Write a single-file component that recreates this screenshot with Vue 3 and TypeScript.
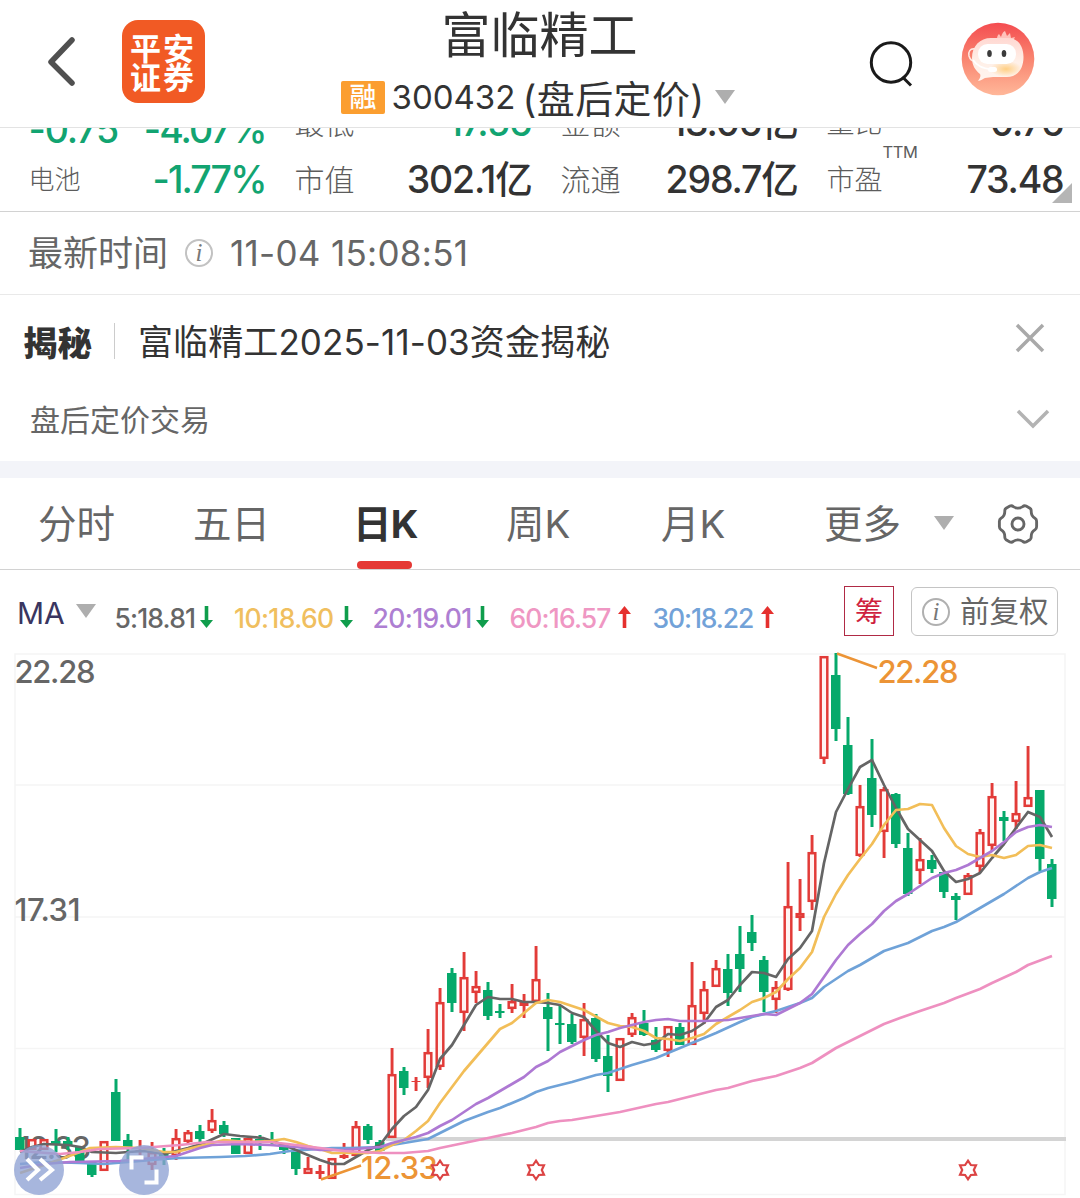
<script setup lang="ts">
type Candle = [kind: 'r' | 'g', high: number, top: number, bottom: number, low: number]

const STEP = 12
const FIRST_X = 20

const candles: Candle[] = [
  ['g', 1128, 1137, 1150, 1150], ['r', 1139, 1139, 1150, 1150], ['r', 1139, 1139, 1150, 1150],
  ['g', 1129, 1141, 1144, 1152], ['g', 1137, 1141, 1145, 1150], ['g', 1147, 1147, 1161, 1161],
  ['g', 1161, 1161, 1175, 1177], ['r', 1141, 1141, 1171, 1171], ['g', 1079, 1092, 1141, 1141],
  ['g', 1134, 1140, 1147, 1160], ['r', 1140, 1150, 1152, 1155], ['r', 1142, 1152, 1165, 1170],
  ['g', 1148, 1153, 1160, 1165], ['r', 1129, 1138, 1156, 1160], ['r', 1130, 1132, 1142, 1144],
  ['g', 1125, 1131, 1139, 1142], ['r', 1109, 1120, 1131, 1133], ['g', 1121, 1125, 1134, 1137],
  ['g', 1138, 1138, 1154, 1154], ['r', 1138, 1138, 1154, 1154], ['g', 1135, 1139, 1141, 1150],
  ['g', 1132, 1139, 1143, 1145], ['g', 1145, 1147, 1150, 1154], ['g', 1152, 1152, 1169, 1175],
  ['r', 1157, 1168, 1174, 1174], ['r', 1165, 1171, 1174, 1179], ['r', 1158, 1158, 1179, 1179],
  ['r', 1143, 1155, 1158, 1159], ['r', 1121, 1126, 1156, 1156], ['g', 1124, 1126, 1140, 1144],
  ['g', 1140, 1142, 1151, 1151], ['r', 1048, 1074, 1138, 1138], ['g', 1067, 1071, 1088, 1095],
  ['r', 1077, 1081, 1082, 1091], ['r', 1029, 1052, 1078, 1088], ['r', 988, 1002, 1067, 1070],
  ['g', 968, 973, 1003, 1012], ['r', 952, 977, 1013, 1031], ['r', 971, 986, 993, 1003],
  ['g', 982, 990, 1016, 1020], ['g', 1004, 1011, 1013, 1018], ['r', 984, 1001, 1009, 1013],
  ['r', 994, 1002, 1006, 1018], ['r', 946, 979, 1002, 1002], ['g', 993, 1007, 1019, 1051],
  ['g', 1006, 1023, 1025, 1044], ['g', 1014, 1024, 1042, 1044], ['r', 1003, 1019, 1038, 1056],
  ['g', 1014, 1018, 1059, 1062], ['g', 1035, 1056, 1076, 1092], ['r', 1038, 1038, 1081, 1081],
  ['r', 1013, 1017, 1035, 1037], ['g', 1010, 1023, 1035, 1036], ['g', 1027, 1040, 1050, 1052],
  ['r', 1026, 1026, 1051, 1057], ['g', 1023, 1027, 1045, 1045], ['r', 962, 1005, 1045, 1045],
  ['r', 981, 989, 1014, 1024], ['r', 960, 968, 987, 987], ['g', 954, 969, 993, 1006],
  ['g', 926, 954, 969, 992], ['g', 915, 932, 943, 951], ['g', 956, 960, 992, 1012],
  ['r', 981, 987, 1000, 1013], ['r', 862, 906, 990, 991], ['r', 879, 913, 918, 931],
  ['r', 835, 852, 902, 910], ['r', 656, 656, 759, 764], ['g', 653, 675, 729, 741],
  ['g', 717, 745, 794, 795], ['r', 785, 806, 856, 857], ['g', 739, 778, 815, 827],
  ['r', 787, 789, 832, 858], ['g', 793, 794, 844, 848], ['g', 833, 848, 894, 896],
  ['r', 838, 859, 871, 884], ['g', 855, 860, 869, 873], ['g', 872, 872, 892, 898],
  ['g', 893, 896, 900, 920], ['r', 873, 875, 895, 895], ['r', 829, 832, 867, 873],
  ['r', 783, 796, 846, 851], ['g', 811, 817, 821, 841], ['r', 781, 813, 822, 829],
  ['r', 746, 797, 807, 807], ['g', 790, 790, 859, 871], ['g', 859, 864, 899, 907],
]

const bars = candles.map(([kind, high, top, bottom, low], i) => ({
  kind, high, top, bottom, low,
  x: FIRST_X + i * STEP,
  hollow: kind === 'r' && bottom - top > 4,
}))

const lines = [
  { color: '#6fa2d8', points: '20,1164 44,1162 80,1163 104,1164 140,1161 164,1159 180,1158 220,1157 245,1156 270,1154 290,1151 332,1148 350,1148 380,1147 392,1145 404,1143 428,1139 440,1133 452,1127 464,1121 488,1112 500,1108 524,1098 536,1092 548,1088 572,1082 596,1075 608,1073 632,1065 656,1058 668,1053 692,1043 716,1033 740,1022 752,1017 776,1011 788,1007 800,1003 812,998 824,987 848,971 860,965 884,951 908,943 920,937 932,931 944,927 956,922 980,908 1004,894 1028,878 1040,872 1052,868' },
  { color: '#656565', points: '20,1152 32,1147 44,1144 68,1145 80,1147 92,1152 116,1153 128,1152 144,1151 164,1154 176,1151 188,1148 204,1143 224,1134 240,1136 263,1138 284,1145 303,1153 320,1160 332,1164 344,1164 356,1157 368,1150 380,1145 392,1129 404,1116 416,1107 428,1090 440,1059 452,1045 464,1025 476,1005 488,997 500,999 512,999 524,1002 536,1002 548,1003 560,1005 572,1013 584,1017 596,1031 608,1043 620,1047 632,1042 644,1045 656,1043 668,1034 680,1035 692,1031 704,1023 716,1007 728,1000 740,985 752,972 764,973 776,977 788,959 800,948 812,931 824,863 836,812 848,789 860,767 872,760 884,785 896,808 908,829 920,840 932,851 944,871 956,882 968,879 980,873 992,858 1004,844 1016,828 1028,812 1040,817 1052,837' },
  { color: '#f2be58', points: '20,1173 44,1165 64,1158 80,1152 90,1148 116,1147 140,1148 164,1152 176,1152 188,1149 200,1146 224,1140 248,1142 270,1141 284,1139 296,1142 308,1146 320,1149 332,1153 344,1153 368,1153 380,1151 392,1145 404,1140 416,1131 428,1121 440,1103 452,1087 464,1071 476,1057 488,1043 500,1029 512,1023 524,1013 536,1003 548,1000 560,1002 584,1010 608,1023 620,1026 632,1027 644,1031 656,1038 668,1039 680,1041 692,1038 704,1034 716,1024 728,1017 740,1010 752,1002 764,998 776,992 788,979 800,968 812,952 824,917 836,894 848,875 860,859 872,844 884,825 896,810 908,809 920,804 932,805 944,828 956,846 968,854 980,857 992,855 1004,858 1016,855 1028,846 1040,845 1052,848' },
  { color: '#ae79d3', points: '20,1168 44,1164 70,1162 120,1161 164,1157 176,1156 188,1152 200,1148 212,1145 240,1144 270,1145 296,1147 320,1150 344,1150 380,1147 392,1143 404,1140 416,1137 428,1133 440,1126 452,1120 476,1104 488,1098 512,1084 524,1077 536,1067 548,1061 560,1052 584,1040 596,1035 608,1032 620,1028 632,1025 644,1022 656,1020 668,1019 680,1021 704,1021 728,1020 740,1018 752,1016 764,1014 776,1015 788,1009 800,1003 812,994 824,977 836,960 848,945 860,934 872,924 884,911 896,901 908,894 920,886 932,878 944,873 956,870 968,865 980,858 992,851 1004,842 1016,832 1028,827 1040,825 1052,827' },
  { color: '#ee90c0', points: '20,1151 60,1154 80,1152 100,1149 140,1148 180,1145 207,1142 240,1142 270,1142 296,1145 320,1148 344,1151 380,1153 404,1153 428,1151 440,1148 464,1143 488,1138 512,1133 536,1127 548,1123 560,1121 572,1120 620,1112 656,1104 668,1102 716,1090 728,1088 752,1081 776,1076 788,1072 800,1068 812,1063 836,1048 860,1036 884,1024 900,1018 920,1011 944,1003 956,998 980,989 992,983 1016,972 1028,965 1052,956' },
]

const averages = [
  { text: '5:18.81', up: false, color: '#666666', x: 114.5, gap: 5, tight: -0.85 },
  { text: '10:18.60', up: false, color: '#f0bf5f', x: 234, gap: 6, tight: -0.6 },
  { text: '20:19.01', up: false, color: '#ae7fd2', x: 372.5, gap: 4, tight: -0.6 },
  { text: '60:16.57', up: true, color: '#ef97c3', x: 509.5, gap: 7, tight: -0.85 },
  { text: '30:18.22', up: true, color: '#72a2d8', x: 652.5, gap: 8, tight: -1.1 },
]

const tabs = [
  { name: '分时', x: 38 },
  { name: '五日', x: 193 },
  { name: '日K', x: 353, on: true },
  { name: '周K', x: 506 },
  { name: '月K', x: 661 },
  { name: '更多', x: 824 },
]

const stars = [440, 536, 968]
const starPath = 'M0-9.3 2.9-5 8-4.7 5.8 0 8 4.7 2.9 5 0 9.3-2.9 5-8 4.7-5.8 0-8-4.7-2.9-5Z'
</script>

<template>
  <div class="page">
    <header class="header">
      <svg class="back" width="32" height="54" viewBox="0 0 32 54"><path d="M26 5 5 27l21 21" /></svg>
      <div class="logo"><span>平安</span><span>证券</span></div>
      <div class="heading">
        <h1>富临精工</h1>
        <div class="sub">
          <span class="tag">融</span>
          <span class="code">300432</span>
          <span class="mode">(盘后定价)</span>
          <i class="tri"></i>
        </div>
      </div>
      <svg class="search" width="48" height="50" viewBox="0 0 48 50">
        <circle cx="23" cy="23.500" r="19.700" /><path d="m35.500 39 7.500 7.500" />
      </svg>
      <svg class="robot" width="74" height="74" viewBox="0 0 74 74">
        <defs>
          <linearGradient id="sky" x1="0" y1="0" x2="0" y2="1">
            <stop offset="0" stop-color="#f44c50" /><stop offset=".5" stop-color="#f98570" /><stop offset="1" stop-color="#ffb799" />
          </linearGradient>
          <linearGradient id="head" x1="0" y1="0" x2="0" y2="1">
            <stop offset="0" stop-color="#ffd8d2" /><stop offset=".55" stop-color="#fff0e8" /><stop offset="1" stop-color="#fff4ee" />
          </linearGradient>
          <radialGradient id="glow"><stop offset="0" stop-color="#ffcf83" /><stop offset="1" stop-color="#ffcf83" stop-opacity="0" /></radialGradient>
        </defs>
        <circle cx="37" cy="37" r="36.300" fill="url(#sky)" />
        <path d="M36 18c0-4 1-5 2-6l2 3c1-4 3-6 4-6l2 5 3-3 1 5 4-1c-2 4-1 5 0 8Z" fill="#ffc2bb" />
        <path d="M30 16h17c10 0 15.500 8 15.500 19 0 12-6 20-17 20H32l-8 1c-2 1-4 2.500-7 3 2-3 3-5 2-7-5-4-8-9-8-16 0-12 8-20 19-20Z" fill="url(#head)" />
        <ellipse cx="45" cy="47" rx="16" ry="8" fill="url(#glow)" />
        <path d="M14 27c-5-1-7 3-6 7 1 3 2 5 5 5" fill="none" stroke="#ffe6df" stroke-width="1.600" />
        <rect x="17" y="22" width="38" height="20" rx="9.500" fill="#fff" />
        <ellipse cx="28.500" cy="31.500" rx="2.300" ry="3.500" fill="#3b3b3b" /><ellipse cx="43" cy="31.500" rx="2.300" ry="3.500" fill="#3b3b3b" />
        <path d="M12 38c4 6 9 8 19 9.500" fill="none" stroke="#fff" stroke-width="1.800" />
        <rect x="27" y="45" width="9" height="5" rx="2.500" fill="#fff" />
      </svg>
    </header>

    <section class="quotes">
      <div class="row first">
        <div class="cell change"><b class="green">-0.75</b><b class="green tight">-4.07%</b></div>
        <div class="cell"><span>最低</span><b class="green">17.56</b></div>
        <div class="cell"><span>金额</span><b>13.06亿</b></div>
        <div class="cell"><span class="narrow">量比</span><b>0.76</b></div>
      </div>
      <div class="row second">
        <div class="cell"><span class="small">电池</span><b class="green tight">-1.77%</b></div>
        <div class="cell"><span>市值</span><b>302.1亿</b></div>
        <div class="cell"><span>流通</span><b>298.7亿</b></div>
        <div class="cell"><span class="narrow">市盈<sup>TTM</sup></span><b>73.48</b></div>
      </div>
      <i class="corner"></i>
    </section>

    <section class="time">
      <span>最新时间</span>
      <svg class="info" width="30" height="30" viewBox="0 0 30 30"><circle cx="15" cy="15" r="13" /><text x="15" y="23">i</text></svg>
      <span class="stamp">11-04 15:08:51</span>
    </section>

    <section class="news">
      <strong>揭秘</strong><i class="bar"></i>
      <span class="title">富临精工<em>2025-11-03</em>资金揭秘</span>
      <svg class="close" width="32" height="32" viewBox="0 0 32 32"><path d="m3 3 26 26M29 3 3 29" /></svg>
    </section>
    <section class="after">
      <span>盘后定价交易</span>
      <svg class="down" width="36" height="24" viewBox="0 0 36 24"><path d="m3 4 15 15L33 4" /></svg>
    </section>
    <div class="band"></div>

    <nav class="tabs">
      <span v-for="t in tabs" :key="t.name" class="tab" :class="{ on: t.on }" :style="{ left: t.x + 'px' }">{{ t.name }}</span>
      <i class="tri more"></i>
      <svg class="gear" width="42" height="42" viewBox="0 0 44 44">
        <path d="M13.500 3.200Q15.500 2.300 17 3.800Q22 7 27 3.800Q28.500 2.300 30.500 3.200L34.500 5.500Q36 6.500 35.800 8.500Q35.800 14 39.800 16Q41.500 17 41.500 19V25Q41.500 27 39.800 28Q35.800 30 35.800 35.500Q36 37.500 34.500 38.500L30.500 40.800Q28.500 41.700 27 40.200Q22 37 17 40.200Q15.500 41.700 13.500 40.800L9.500 38.500Q8 37.500 8.200 35.500Q8.200 30 4.200 28Q2.500 27 2.500 25V19Q2.500 17 4.200 16Q8.200 14 8.200 8.500Q8 6.500 9.500 5.500Z" />
        <circle cx="22" cy="22" r="6.300" />
      </svg>
    </nav>

    <section class="legend">
      <span class="ma">MA</span><i class="tri"></i>
      <span v-for="a in averages" :key="a.text" class="avg" :style="{ color: a.color, left: a.x + 'px', letterSpacing: a.tight + 'px' }">
        {{ a.text }}<svg width="13" height="22" viewBox="0 0 13 22" :style="{ marginLeft: a.gap + 'px' }">
          <g v-if="a.up" fill="#e5302e"><path d="M6.500 0 13 8H0Z" /><rect x="4.700" y="6" width="3.600" height="16" /></g>
          <g v-else fill="#0f9d4c"><path d="M6.500 22 13 14H0Z" /><rect x="4.700" y="0" width="3.600" height="16" /></g>
        </svg>
      </span>
      <span class="chips">筹</span>
      <span class="adjust">
        <svg class="info" width="30" height="30" viewBox="0 0 30 30"><circle cx="15" cy="15" r="13" /><text x="15" y="23">i</text></svg><span>前复权</span>
      </span>
    </section>

    <svg class="chart" width="1080" height="558" viewBox="0 640 1080 558">
      <path class="grid" d="M15 654H1065V1194.500H15ZM15 785H1065M15 917H1065M15 1048.500H1065" />
      <rect x="386" y="1137" width="680" height="4" fill="#d4d4d4" />
      <text class="axis" x="14.500" y="683" textLength="81">22.28</text>
      <text class="axis" x="14.500" y="921" textLength="66">17.31</text>
      <text class="axis" x="18" y="1159" textLength="73">12.33</text>
      <g v-for="b in bars" :key="b.x">
        <template v-if="b.kind === 'g'">
          <rect :x="b.x - 1.500" :y="b.high" width="3" :height="b.low - b.high" fill="#06a96b" />
          <rect :x="b.x - 5" :y="b.top" width="9.500" :height="b.bottom - b.top" fill="#06a96b" />
        </template>
        <template v-else>
          <rect :x="b.x - 1.400" :y="b.high" width="2.900" :height="b.top - b.high" fill="#e23b38" />
          <rect :x="b.x - 1.400" :y="b.bottom" width="2.900" :height="b.low - b.bottom" fill="#e23b38" />
          <rect v-if="b.hollow" :x="b.x - 3.300" :y="b.top + 1.200" width="6.600" :height="b.bottom - b.top - 2.400" fill="#fff4f3" stroke="#e23b38" stroke-width="2.500" />
          <rect v-else :x="b.x - 4.500" :y="b.top" width="9" :height="b.bottom - b.top" fill="#e23b38" />
        </template>
      </g>
      <polyline v-for="l in lines" :key="l.color" :points="l.points" :stroke="l.color" class="line" />
      <path d="M837 653.500 877 668M321 1179.500l40-14" stroke="#ec9436" stroke-width="2.500" fill="none" />
      <text class="peak" x="877.500" y="683" textLength="81">22.28</text>
      <text class="peak" x="361" y="1179" textLength="77">12.33</text>
      <path v-for="s in stars" :key="s" :d="starPath" :transform="`translate(${s} 1170)`" class="star" />
      <g fill="#8ea1d4" fill-opacity=".78"><circle cx="39" cy="1170" r="25" /><circle cx="144" cy="1170" r="25" /></g>
      <path d="M27 1159l11 11-11 10M40 1159l12 11-12 10M131.500 1169.500v-12h12M144.500 1182.500h12v-13" fill="none" stroke="#fff" stroke-width="4" />
    </svg>
  </div>
</template>

<style>
body { margin: 0; background: #fff; }
</style>

<style scoped>
.page { width: 1080px; height: 1198px; overflow: hidden; background: #fff; color: #333; font-family: Inter, "Noto Sans CJK SC", sans-serif; }
.page * { box-sizing: border-box; }
i, em { font-style: normal; }
span, b, strong, h1 { white-space: nowrap; }
.tri { width: 0; height: 0; border: 10.500px solid transparent; border-top: 14px solid #aeaeae; border-bottom: 0; }
.header { position: relative; height: 128px; border-bottom: 1px solid #e3e3e3; display: flex; align-items: flex-start; }
.back { margin: 35px 0 0 46px; fill: none; stroke: #505050; stroke-width: 5.500; stroke-linecap: round; stroke-linejoin: round; }
.logo { width: 83px; height: 83px; margin: 20px 0 0 44px; border-radius: 16px; background: #f15a24; color: #fff; display: flex; flex-direction: column; padding: 14px 0 0 8px; font-weight: 700; font-size: 31px; letter-spacing: 2px; line-height: 29px; text-align: left; }
.heading { width: 410px; margin-left: 130px; }
h1 { margin: 0 0 0 106.500px; font-size: 49px; font-weight: 400; line-height: 71px; }
.sub { display: flex; align-items: center; height: 50px; margin-top: 1px; margin-left: 6px; line-height: 1; }
.tag { width: 44px; height: 33px; line-height: 33px; background: #fb9e30; border-radius: 2px; color: #fff; font-size: 27px; text-align: center; font-weight: 500; }
.code { font-size: 33px; margin-left: 6.500px; width: 131px; margin-top: 1px; }
.mode { font-size: 38px; width: 192px; letter-spacing: 0.400px; margin-top: 3px; }
.search { position: absolute; left: 868px; top: 39px; fill: none; stroke: #1a1a1a; stroke-width: 3; }
.robot { position: absolute; left: 961px; top: 21.500px; }
.quotes { position: relative; height: 84px; overflow: hidden; border-bottom: 1px solid #d2d2d2; }
.row { display: grid; grid-template-columns: repeat(4, 237px); column-gap: 29px; margin-left: 28.500px; height: 42px; }
.first { margin-top: -28px; }
.second { margin-top: 17px; }
.cell { display: flex; justify-content: space-between; align-items: center; height: 42px; line-height: 42px; }
.cell span { font-size: 30px; color: #5c5c5c; font-weight: 300; position: relative; }
.cell .small { font-size: 26px; }
.cell .narrow { font-size: 28px; }
.cell b { font-size: 37.500px; font-weight: 500; letter-spacing: -1.200px; }
.cell .green { color: #12a471; }
.cell .tight { letter-spacing: -1.900px; }
.first .cell { padding-top: 3px; }
.first .change { margin-top: 9px; padding-top: 0; }
sup { position: absolute; left: 56px; top: -17px; font-size: 16.500px; line-height: 20px; font-weight: 400; letter-spacing: -0.400px; }
.corner { position: absolute; left: 1052px; top: 55px; border: solid transparent; border-width: 0 0 20px 20px; border-bottom-color: #b5b5b5; }
.time { height: 83px; border-bottom: 1px solid #e9e9e9; display: flex; align-items: center; padding-left: 28px; font-size: 35px; color: #666; line-height: 60px; }
.time .info { margin: 0 16px; }
.time .info circle { stroke: #c2c2c2; }
.stamp { font-size: 35px; letter-spacing: 0.300px; }
.info circle { fill: none; stroke: #b0b0b0; stroke-width: 2; }
.info text { font: italic 25px "Liberation Serif", serif; fill: #777; text-anchor: middle; }
.news { height: 92px; display: flex; align-items: center; padding-left: 23px; font-size: 35px; position: relative; }
.news strong { font-size: 34.500px; font-weight: 800; }
.bar { width: 1px; height: 36px; background: #ccc; margin: 0 23px 0 22px; }
.title { margin-top: -4px; letter-spacing: 0.100px; }
.close { position: absolute; left: 1014px; top: 27px; fill: none; stroke: #a9a9a9; stroke-width: 3.500; }
.after { height: 74px; padding: 12px 0 0 30px; font-size: 30px; line-height: 42px; color: #666; position: relative; }
.down { position: absolute; left: 1015px; top: 20px; fill: none; stroke: #b3b3b3; stroke-width: 3.500; }
.band { height: 17px; background: #f3f4f9; }
.tabs { height: 92px; border-bottom: 1px solid #d2d2d2; position: relative; }
.tab { position: absolute; top: 14px; font-size: 38.500px; line-height: 64px; color: #666; }
.on { color: #333; font-weight: 700; letter-spacing: -0.800px; }
.on::after { content: ""; position: absolute; left: 4px; top: 69px; width: 55px; height: 8px; border-radius: 4px; background: #e53935; }
.more { position: absolute; left: 934px; top: 38px; }
.gear { position: absolute; left: 997px; top: 25px; fill: none; stroke: #666; stroke-width: 3; }
.legend { height: 70px; position: relative; display: flex; }
.ma { margin: 20px 0 0 17px; font-size: 30px; line-height: 46px; color: #3a3560; width: 59px; }
.legend > .tri { margin-top: 34px; }
.avg { position: absolute; top: 30px; line-height: 36px; font-size: 26.500px; font-weight: 500; display: flex; align-items: center; }
.avg svg { margin-top: -2px; }
.chips { position: absolute; left: 844px; top: 16px; width: 50px; height: 50px; border: 1.500px solid #b02a45; color: #cf1f3f; font-size: 28px; line-height: 50px; text-align: center; }
.adjust { position: absolute; left: 911px; top: 17px; width: 147px; height: 49px; border: 1px solid #c4c4c4; border-radius: 6px; padding-left: 9px; display: flex; align-items: center; font-size: 29.500px; line-height: 40px; color: #666; }
.adjust .info { margin-right: 9px; }
.adjust span { margin-top: -1px; }
.chart { display: block; }
.grid { fill: none; stroke: #f5f5f5; stroke-width: 1.500; }
.axis { font-size: 31px; font-weight: 500; fill: #666; }
.peak { font-size: 31px; font-weight: 500; fill: #ec9436; }
.line { fill: none; stroke-width: 2.700; stroke-linejoin: round; }
.star { fill: #fff; stroke: #dc4444; stroke-width: 2.200; }
</style>
